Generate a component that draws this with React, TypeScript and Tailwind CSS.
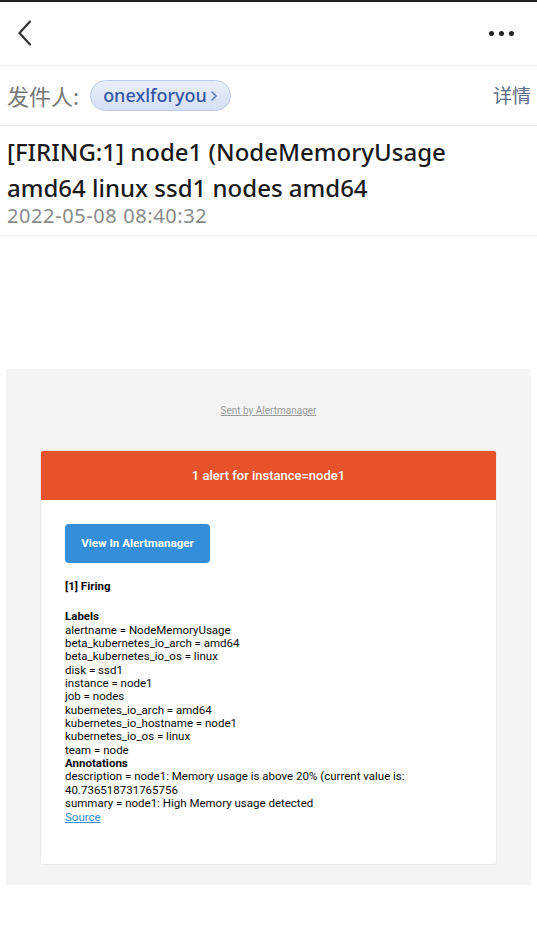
import React from "react";

const labels = [
  "alertname = NodeMemoryUsage",
  "beta_kubernetes_io_arch = amd64",
  "beta_kubernetes_io_os = linux",
  "disk = ssd1",
  "instance = node1",
  "job = nodes",
  "kubernetes_io_arch = amd64",
  "kubernetes_io_hostname = node1",
  "kubernetes_io_os = linux",
  "team = node",
];

export default function App() {
  return (
    <div className="w-[537px] h-[937px] bg-white overflow-hidden" style={{ fontFamily: '"Noto Sans", "Noto Sans CJK SC", sans-serif' }}>
      <div className="h-[2px] bg-[#222]" />
      {/* nav */}
      <div className="h-[64px] flex items-center justify-between pl-[17px] pr-[23px] border-b border-[#f0f0f0]">
        <svg width="16" height="26" viewBox="0 0 16 26" className="mt-[-2px]">
          <path d="M13 1.5 L2.5 13 L13 24.5" fill="none" stroke="#333" strokeWidth="2.2" strokeLinecap="round" strokeLinejoin="round" />
        </svg>
        <div className="flex gap-[5px] items-center">
          <span className="w-[5px] h-[5px] rounded-full bg-[#222]" />
          <span className="w-[5px] h-[5px] rounded-full bg-[#222]" />
          <span className="w-[5px] h-[5px] rounded-full bg-[#222]" />
        </div>
      </div>
      {/* sender */}
      <div className="h-[60px] flex items-center justify-between pl-[7px] pr-[6px] border-b border-[#eee]">
        <div className="flex items-center">
          <span className="text-[22px] text-[#777]" style={{ fontFamily: '"Noto Sans CJK SC", sans-serif' }}>发件人:</span>
          <span className="ml-[11px] h-[31px] pl-[12px] pr-[12px] rounded-full border border-[#b8c8e6] bg-gradient-to-b from-[#e8eefa] to-[#d5e0f4] flex items-center text-[#3555a5] text-[18px] font-medium">
            onexlforyou
            <svg width="8" height="12" viewBox="0 0 8 12" className="ml-[3px]">
              <path d="M2 2 L6 6 L2 10" fill="none" stroke="#5a7cc4" strokeWidth="1.6" strokeLinecap="round" />
            </svg>
          </span>
        </div>
        <span className="text-[19px] text-[#5b6a86]" style={{ fontFamily: '"Noto Sans CJK SC", sans-serif' }}>详情</span>
      </div>
      {/* title */}
      <div className="pl-[7px] pt-[8px] pb-[7px] border-b border-[#eee]">
        <div className="text-[24px] leading-[36px] text-[#1a1a1a] font-medium">
          [FIRING:1] node1 (NodeMemoryUsage
          <br />
          amd64 linux ssd1 nodes amd64
        </div>
        <div className="text-[20px] leading-[24px] text-[#8a8a8a] tracking-[0.6px] mt-[-2px]">2022-05-08 08:40:32</div>
      </div>
      {/* email */}
      <div className="mt-[133px] mx-[6px] bg-[#f4f4f4] h-[516px] pt-[36px]" style={{ fontFamily: 'Roboto, "Liberation Sans", sans-serif' }}>
        <div className="text-center text-[10px] leading-[12px] text-[#999]">
          <span className="underline">Sent by Alertmanager</span>
        </div>
        <div className="mx-[34px] mt-[33px] bg-white rounded-[3px] border border-[#eaeaea] h-[415px] overflow-hidden">
          <div className="h-[49px] bg-[#e6522c] flex items-center justify-center text-white text-[13px] font-medium">
            1 alert for instance=node1
          </div>
          <div className="pl-[24px] pt-[24px] text-[11.5px] leading-[13.35px] text-[#0a0a0a]">
            <div className="w-[145px] h-[39px] bg-[#348eda] rounded-[4px] flex items-center justify-center text-white font-bold text-[11.6px]">
              View In Alertmanager
            </div>
            <div className="mt-[17px] font-bold">[1] Firing</div>
            <div className="h-[17px]" />
            <div className="font-bold">Labels</div>
            {labels.map((l) => (
              <div key={l}>{l}</div>
            ))}
            <div className="font-bold">Annotations</div>
            <div>description = node1: Memory usage is above 20% (current value is:</div>
            <div>40.736518731765756</div>
            <div>summary = node1: High Memory usage detected</div>
            <div className="text-[#348eda] underline">Source</div>
          </div>
        </div>
      </div>
    </div>
  );
}
